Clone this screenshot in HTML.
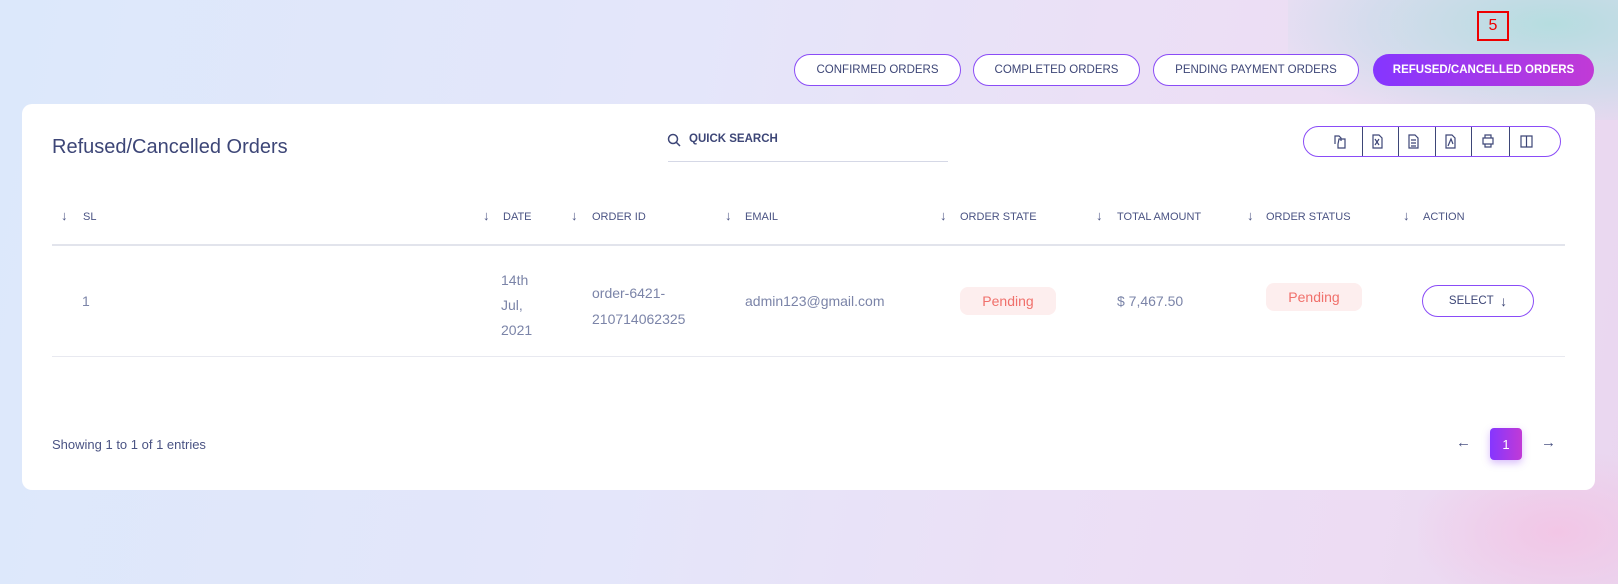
<!DOCTYPE html>
<html><head><meta charset="utf-8"><style>
*{margin:0;padding:0;box-sizing:border-box}
body{width:1618px;height:584px;overflow:hidden;position:relative;font-family:"Liberation Sans",sans-serif;color:#3d4677;
background:linear-gradient(100deg,#dce8fb 0%,#e4e6fa 40%,#ebe0f6 65%,#eddcf3 85%,#e9d6ef 100%)}
.bgtr{position:absolute;right:0;top:0;width:330px;height:120px;background:radial-gradient(ellipse at 80% 20%,#b6dde0 0%,rgba(190,220,230,0.5) 50%,rgba(0,0,0,0) 80%)}
.bgbr{position:absolute;right:0;bottom:0;width:200px;height:130px;background:radial-gradient(ellipse at 70% 60%,#f2c6e6 0%,rgba(240,200,230,0) 75%)}
.abs{position:absolute;white-space:nowrap}
.tab{position:absolute;top:54px;height:32px;border:1.5px solid #8a4cf7;border-radius:16px;background:#fff;font-size:11.5px;display:flex;align-items:center;justify-content:center;color:#3d4677}
.tab.act{background:linear-gradient(90deg,#8536ff,#c13ad6);color:#fff;border:none;font-weight:bold}
.card{position:absolute;left:22px;top:104px;width:1573px;height:386px;background:#fff;border-radius:10px}
.hd{font-size:11px;color:#4a5383;top:211px}
.ar{font-size:13px;color:#4a5383;top:208px}
.cell{font-size:14px;color:#7b84a8}
.pill{position:absolute;background:#fdeeee;color:#f0706b;font-size:14px;border-radius:8px;display:flex;align-items:center;justify-content:center}
</style></head><body>
<div class="bgtr"></div><div class="bgbr"></div>
<div class="abs" style="left:1477px;top:11px;width:32px;height:30px;border:2px solid #e00;color:#e00;font-size:16px;text-align:center;line-height:26px">5</div>
<div class="tab" style="left:794px;width:167px">CONFIRMED ORDERS</div>
<div class="tab" style="left:973px;width:167px">COMPLETED ORDERS</div>
<div class="tab" style="left:1153px;width:206px">PENDING PAYMENT ORDERS</div>
<div class="tab act" style="left:1373px;width:221px">REFUSED/CANCELLED ORDERS</div>
<div class="card"></div>
<div class="abs" style="left:52px;top:136px;font-size:20px;color:#3d4677">Refused/Cancelled Orders</div>
<svg class="abs" style="left:667px;top:133px" width="14" height="14" viewBox="0 0 14 14"><circle cx="6" cy="6" r="4.5" fill="none" stroke="#3d4677" stroke-width="1.5"/><path d="M9.3 9.3L13 13" stroke="#3d4677" stroke-width="1.5"/></svg>
<div class="abs" style="left:689px;top:133px;font-size:11.5px;color:#3d4677;font-weight:bold">QUICK SEARCH</div>
<div class="abs" style="left:668px;top:161px;width:280px;height:1px;background:#d5d8e6"></div>
<div class="abs" style="left:1303px;top:126px;width:258px;height:31px;border:1.5px solid #8a4cf7;border-radius:16px"></div>
<div class="abs" style="left:1362px;top:127px;width:1px;height:29px;background:#3d4677"></div>
<div class="abs" style="left:1398px;top:127px;width:1px;height:29px;background:#3d4677"></div>
<div class="abs" style="left:1435px;top:127px;width:1px;height:29px;background:#3d4677"></div>
<div class="abs" style="left:1471px;top:127px;width:1px;height:29px;background:#3d4677"></div>
<div class="abs" style="left:1509px;top:127px;width:1px;height:29px;background:#3d4677"></div>
<svg class="abs" style="left:1300px;top:126px" width="260" height="31" viewBox="0 0 260 31" fill="none" stroke="#3d4677" stroke-width="1.2">
<path d="M35 18V10h4l2 2v3M39 13h6v9h-7v-4z"/>
<path d="M73 9h6l3 3v10h-9zM75 13l4 6M79 13l-4 6"/>
<path d="M109 9h6l3 3v10h-9zM111 14h5M111 17h5M111 20h5"/>
<path d="M146 9h6l3 3v10h-9zM148 20l3-7 2 5"/>
<path d="M183 12h10v6h-10zM185 12v-3h6v3M185 18v3h6v-3"/>
<path d="M221 10h11v11h-11zM226.5 10v11"/>
</svg>
<div class="abs ar" style="left:61px">↓</div><div class="abs hd" style="left:83px">SL</div>
<div class="abs ar" style="left:483px">↓</div><div class="abs hd" style="left:503px">DATE</div>
<div class="abs ar" style="left:571px">↓</div><div class="abs hd" style="left:592px">ORDER ID</div>
<div class="abs ar" style="left:725px">↓</div><div class="abs hd" style="left:745px">EMAIL</div>
<div class="abs ar" style="left:940px">↓</div><div class="abs hd" style="left:960px">ORDER STATE</div>
<div class="abs ar" style="left:1096px">↓</div><div class="abs hd" style="left:1117px">TOTAL AMOUNT</div>
<div class="abs ar" style="left:1247px">↓</div><div class="abs hd" style="left:1266px">ORDER STATUS</div>
<div class="abs ar" style="left:1403px">↓</div><div class="abs hd" style="left:1423px">ACTION</div>
<div class="abs" style="left:52px;top:244px;width:1513px;height:2px;background:#e2e4ec"></div>
<div class="abs cell" style="left:82px;top:293px">1</div>
<div class="abs cell" style="left:501px;top:268px;line-height:25px">14th<br>Jul,<br>2021</div>
<div class="abs cell" style="left:592px;top:280px;line-height:26px">order-6421-<br>210714062325</div>
<div class="abs cell" style="left:745px;top:293px">admin123@gmail.com</div>
<div class="pill" style="left:960px;top:287px;width:96px;height:28px">Pending</div>
<div class="abs cell" style="left:1117px;top:293px">$ 7,467.50</div>
<div class="pill" style="left:1266px;top:283px;width:96px;height:28px">Pending</div>
<div class="abs" style="left:1422px;top:285px;width:112px;height:32px;border:1.5px solid #8a4cf7;border-radius:16px;font-size:11.5px;display:flex;align-items:center;justify-content:center;color:#3d4677">SELECT&nbsp;&nbsp;<span style="font-size:14px">↓</span></div>
<div class="abs" style="left:52px;top:356px;width:1513px;height:1px;background:#e8e9f0"></div>
<div class="abs" style="left:52px;top:437px;font-size:13px;color:#4a5383">Showing 1 to 1 of 1 entries</div>
<div class="abs" style="left:1456px;top:434px;font-size:15px;color:#4a5383">←</div>
<div class="abs" style="left:1490px;top:428px;width:32px;height:32px;border-radius:4px;background:linear-gradient(90deg,#8536ff,#c13ad6);color:#fff;font-size:13px;display:flex;align-items:center;justify-content:center;box-shadow:0 3px 8px rgba(140,60,240,0.35)">1</div>
<div class="abs" style="left:1541px;top:434px;font-size:15px;color:#4a5383">→</div>
</body></html>
